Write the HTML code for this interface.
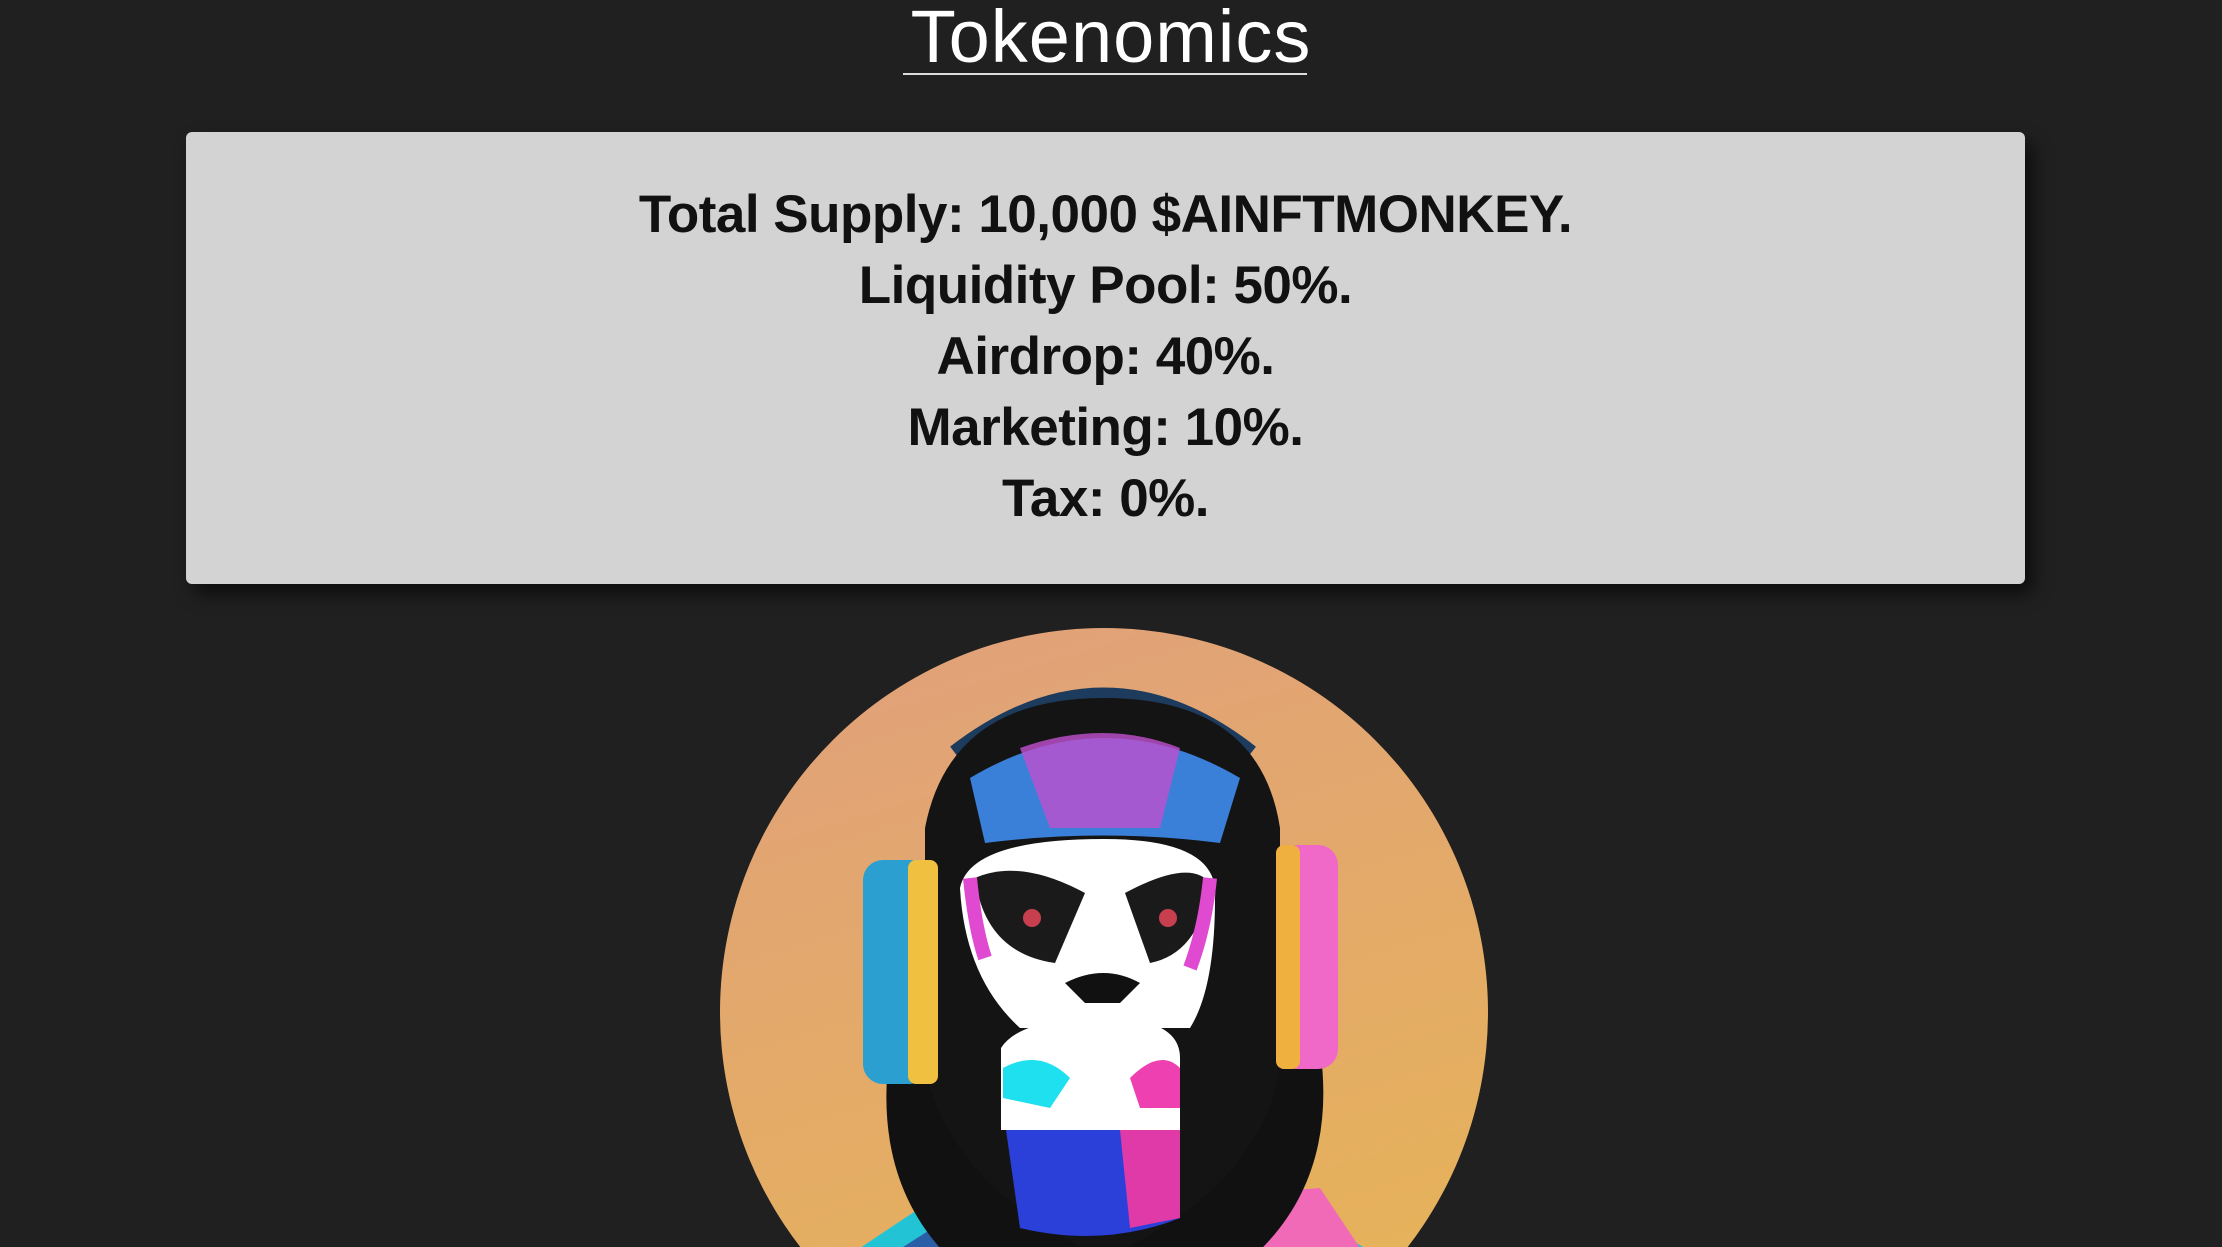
<!DOCTYPE html>
<html><head><meta charset="utf-8"><style>
html,body{margin:0;padding:0;background:#202020;width:2222px;height:1247px;overflow:hidden;font-family:"Liberation Sans",sans-serif}
#wrap{position:relative;width:2222px;height:1247px;overflow:hidden}
h1{position:absolute;left:0;right:0;top:-8px;margin:0;text-align:center;color:#fff;font-weight:500;font-size:74px;line-height:90px;letter-spacing:1px}
.ul{position:absolute;left:903px;width:404px;top:73px;height:2px;background:#ddd}
.box{position:absolute;left:186px;top:132px;width:1839px;height:452px;background:#d3d3d3;border-radius:6px;box-shadow:8px 10px 18px rgba(0,0,0,.6)}
.box p{margin:0;text-align:center;font-size:53px;font-weight:bold;color:#111;line-height:71px;letter-spacing:-0.5px}
.txt{position:absolute;top:47px;left:0;right:0}
svg{position:absolute;left:720px;top:628px}
</style></head><body><div id="wrap">
<h1>Tokenomics</h1><div class="ul"></div>
<div class="box"><div class="txt"><p>Total Supply: 10,000 $AINFTMONKEY.</p><p>Liquidity Pool: 50%.</p><p>Airdrop: 40%.</p><p>Marketing: 10%.</p><p>Tax: 0%.</p></div></div>
<svg width="768" height="619" viewBox="0 0 768 619">
<defs><linearGradient id="bg" x1="0" y1="0" x2="0.3" y2="1"><stop offset="0" stop-color="#e0a07c"/><stop offset="1" stop-color="#e6b25a"/></linearGradient>
<clipPath id="c"><circle cx="384" cy="384" r="384"/></clipPath></defs>
<g clip-path="url(#c)">
<rect width="768" height="768" fill="url(#bg)"/>
<path d="M60 768 L110 640 L230 560 L384 600 L540 560 L680 640 L730 768Z" fill="#23c3d6"/>
<path d="M150 640 L260 570 L300 768 L170 768Z" fill="#2a5fa8"/>
<path d="M470 570 L600 560 L640 620 L560 700 Z" fill="#f06ab8"/>
<path d="M170 420 Q150 560 240 640 L384 680 L520 640 Q620 560 600 420 Z" fill="#111"/>
<path d="M235 125 Q384 10 531 125" stroke="#1d3b5c" stroke-width="16" fill="none"/>
<path d="M205 200 Q230 70 384 70 Q540 70 560 200 L560 440 Q540 560 384 630 Q230 560 205 440Z" fill="#141414"/>
<path d="M250 150 Q384 70 520 150 L500 215 Q384 200 265 215Z" fill="#3a7fd8"/>
<path d="M300 120 Q384 90 460 120 L440 200 L330 200Z" fill="#c050d0" opacity=".8"/>
<rect x="143" y="232" width="67" height="224" rx="20" fill="#2b9fd0"/>
<rect x="188" y="232" width="30" height="224" rx="8" fill="#f0c040"/>
<rect x="556" y="217" width="62" height="224" rx="20" fill="#f068c8"/>
<rect x="556" y="217" width="24" height="224" rx="8" fill="#f0b040"/>
<path d="M240 260 Q250 211 384 211 Q500 211 495 270 Q495 360 470 400 L300 400 Q245 350 240 260Z" fill="#fff"/>
<path d="M255 250 Q300 230 365 265 L335 335 Q265 325 255 250Z" fill="#1a1a1a"/>
<path d="M405 265 Q470 230 490 255 Q480 325 430 335Z" fill="#1a1a1a"/>
<path d="M250 250 Q255 300 265 330" stroke="#e04ad0" stroke-width="14" fill="none"/>
<path d="M490 250 Q485 300 470 340" stroke="#e04ad0" stroke-width="14" fill="none"/>
<circle cx="312" cy="290" r="9" fill="#c84050"/><circle cx="448" cy="290" r="9" fill="#c84050"/>
<path d="M281 420 Q300 390 384 390 Q460 390 460 430 L460 502 L281 502Z" fill="#fff"/>
<path d="M283 440 Q320 420 350 450 L330 480 L283 470Z" fill="#1ee0ee"/>
<path d="M410 450 Q440 420 460 440 L460 480 L420 480Z" fill="#ee40b0"/>
<path d="M345 355 Q384 335 420 355 L400 375 L365 375Z" fill="#111"/>
<path d="M286 502 L460 502 L460 590 Q384 620 300 600Z" fill="#2a40d8"/>
<path d="M400 502 L460 502 L460 590 L410 600Z" fill="#e03aa8"/>
</g></svg>
</div></body></html>
